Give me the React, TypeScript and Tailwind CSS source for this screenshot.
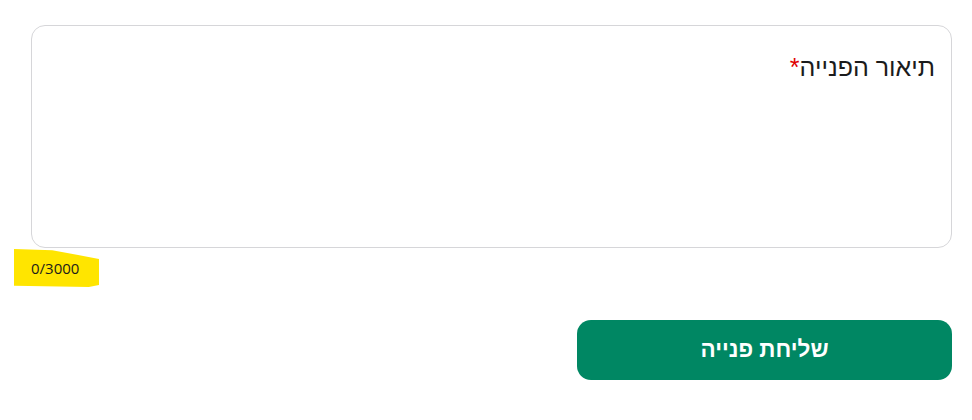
import React, { useState } from 'react';

const MAX = 3000;

export default function App() {
  const [text, setText] = useState('');

  return (
    <div className="w-[972px] h-[420px] bg-white pt-[25px] pl-[31px] pr-[20px] font-['Liberation_Sans',Arial,sans-serif]">
      {/* textarea box */}
      <div className="relative h-[223px] w-[921px] rounded-[14px] border border-[#d6d6d9] bg-white">
        {!text && (
          <div
            dir="rtl"
            className="pointer-events-none absolute right-[16px] top-[25px] text-[25px] leading-[32px] text-[#1b1b1b]"
          >
            תיאור הפנייה<span className="text-[#e00000]">*</span>
          </div>
        )}
        <textarea
          dir="rtl"
          value={text}
          maxLength={MAX}
          onChange={(e) => setText(e.target.value)}
          className="h-full w-full resize-none rounded-[14px] bg-transparent px-[16px] pt-[25px] text-[25px] outline-none"
        />
      </div>

      {/* counter */}
      <div className="relative mt-[1px] h-[38px] w-[85px] -ml-[17px]">
        <div className="absolute inset-0 bg-[#ffe500] [clip-path:polygon(0%_0%,45%_3%,100%_26%,100%_95%,88%_100%,0%_97%)]" />
        <span className="absolute left-[17px] top-[10px] font-['Open_Sans',sans-serif] text-[15px] leading-[18px] text-[#1b1b1b]">
          {text.length}/{MAX}
        </span>
      </div>

      {/* submit */}
      <div className="mt-[33px] flex justify-end">
        <button
          dir="rtl"
          className="h-[60px] w-[375px] rounded-[14px] bg-[#008763] text-[22.5px] font-bold text-white"
        >
          שליחת פנייה
        </button>
      </div>
    </div>
  );
}
